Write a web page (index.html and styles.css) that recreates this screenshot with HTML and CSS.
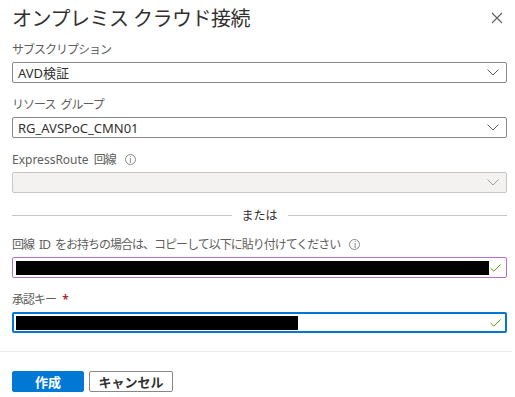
FILE: index.html
```html
<!DOCTYPE html>
<html lang="ja">
<head>
    <meta charset="UTF-8">
    <meta name="viewport" content="width=device-width, initial-scale=1.0">
    <title>オンプレミス クラウド接続</title>
    <link rel="stylesheet" href="styles.css">
</head>
<body>
    <div class="panel">
        <header class="panel-header">
            <h1>オンプレミス クラウド接続</h1>
            <button class="close-btn" aria-label="閉じる">
                <svg width="12" height="12" viewBox="0 0 12 12"><path d="M1 1L11 11M11 1L1 11" stroke="#605e5c" stroke-width="1.1" fill="none"/></svg>
            </button>
        </header>

        <div class="panel-body">
            <div class="field">
                <label>サブスクリプション</label>
                <div class="select">
                    <span class="value">AVD検証</span>
                    <svg class="chevron" width="12" height="7" viewBox="0 0 12 7"><path d="M0.5 0.5L6 6L11.5 0.5" stroke="#605e5c" fill="none"/></svg>
                </div>
            </div>

            <div class="field">
                <label>リソース グループ</label>
                <div class="select">
                    <span class="value">RG_AVSPoC_CMN01</span>
                    <svg class="chevron" width="12" height="7" viewBox="0 0 12 7"><path d="M0.5 0.5L6 6L11.5 0.5" stroke="#605e5c" fill="none"/></svg>
                </div>
            </div>

            <div class="field">
                <label><span class="latin">ExpressRoute</span> 回線 <span class="info">i</span></label>
                <div class="select disabled">
                    <span class="value"></span>
                    <svg class="chevron" width="12" height="7" viewBox="0 0 12 7"><path d="M0.5 0.5L6 6L11.5 0.5" stroke="#a19f9d" fill="none"/></svg>
                </div>
            </div>

            <div class="divider"><span>または</span></div>

            <div class="field">
                <label>回線 ID をお持ちの場合は、コピーして以下に貼り付けてください <span class="info">i</span></label>
                <div class="textbox valid">
                    <span class="redacted" style="width: 473px"></span>
                    <svg class="check" width="11" height="8" viewBox="0 0 11 8"><path d="M0.5 4L3.8 7.2L10.5 0.5" stroke="#57a300" fill="none"/></svg>
                </div>
            </div>

            <div class="field">
                <label>承認キー <span class="required">*</span></label>
                <div class="textbox focused">
                    <span class="redacted" style="width: 282px"></span>
                    <svg class="check" width="11" height="8" viewBox="0 0 11 8"><path d="M0.5 4L3.8 7.2L10.5 0.5" stroke="#57a300" fill="none"/></svg>
                </div>
            </div>
        </div>

        <footer class="panel-footer">
            <button class="btn primary">作成</button>
            <button class="btn">キャンセル</button>
        </footer>
    </div>
</body>
</html>
```

FILE: styles.css
```css
body {
    font-family: "Segoe UI", "Noto Sans", "Noto Sans CJK JP", sans-serif;
    margin: 0;
    padding: 0;
    background-color: #fff;
    color: #323130;
}

.panel {
    width: 515px;
}

.panel-header {
    display: flex;
    align-items: center;
    justify-content: space-between;
    height: 38px;
    padding: 0 12px 0 12px;
}

.panel-header h1 {
    margin: 0;
    font-size: 20px;
    font-weight: 400;
    line-height: 38px;
    letter-spacing: -0.5px;
    color: #323130;
}

.close-btn {
    border: none;
    background: none;
    padding: 0;
    width: 12px;
    height: 12px;
    margin-top: -2px;
    display: flex;
}

.panel-body {
    padding: 3px 8px 0 12px;
}

.field {
    margin-bottom: 13px;
}

.field:last-child {
    margin-bottom: 0;
}

.field label {
    display: block;
    height: 18px;
    line-height: 18px;
    margin-bottom: 3px;
    font-size: 12px;
    letter-spacing: -1px;
    word-spacing: 3px;
    color: #605e5c;
}

.field label .latin {
    letter-spacing: 0;
}

.info {
    display: inline-flex;
    align-items: center;
    justify-content: center;
    vertical-align: middle;
    width: 9px;
    height: 9px;
    margin: -2px 0 0 4px;
    border: 1px solid #8a8886;
    border-radius: 50%;
    font-size: 8px;
    letter-spacing: 0;
    line-height: 1;
    color: #605e5c;
}

.required {
    margin-left: 1px;
    color: #a4262c;
    font-weight: 600;
}

.select,
.textbox {
    display: flex;
    align-items: center;
    justify-content: space-between;
    box-sizing: border-box;
    height: 21px;
    padding: 0 7px 0 5px;
    border: 1px solid #8a8886;
    border-radius: 2px;
    font-size: 13px;
    color: #323130;
}

.select.disabled {
    background-color: #f3f2f1;
    border-color: #c8c6c4;
}

.chevron {
    flex-shrink: 0;
}

.textbox {
    padding: 0 5px 0 3px;
}

.textbox.valid {
    border-color: #b46fcc;
}

.textbox.focused {
    border: 2px solid #0078d4;
    padding: 0 4px 0 2px;
}

.redacted {
    display: block;
    height: 14px;
    background-color: #000;
}

.divider {
    display: flex;
    align-items: center;
    gap: 10px;
    height: 18px;
    margin: 5px 0 12px;
    font-size: 12px;
    color: #323130;
}

.divider::before,
.divider::after {
    content: "";
    flex: 1;
    border-top: 1px solid #c8c6c4;
}

.panel-footer {
    display: flex;
    gap: 5px;
    margin-top: 18px;
    padding: 19px 12px 0;
    border-top: 1px solid #edebe9;
    width: 488px;
}

.btn {
    box-sizing: border-box;
    height: 21px;
    padding: 0;
    width: 84px;
    border: 1px solid #8a8886;
    border-radius: 2px;
    background-color: #fff;
    font-family: inherit;
    font-size: 13px;
    font-weight: 600;
    color: #323130;
}

.btn.primary {
    width: 72px;
    border-color: #0078d4;
    background-color: #0078d4;
    color: #fff;
}
```
